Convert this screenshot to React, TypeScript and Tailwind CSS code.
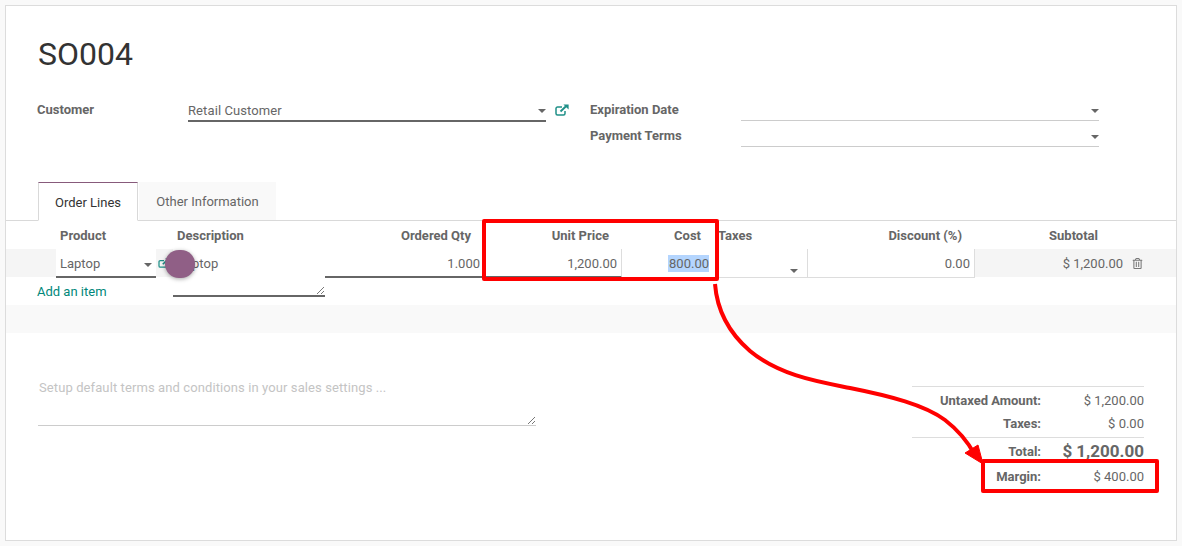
import React from "react";
import { FaRegTrashAlt } from "react-icons/fa";

function Caret({ className = "" }: { className?: string }) {
  return <span className={`w-0 h-0 border-x-[4px] border-x-transparent border-t-[4px] border-t-[#666] ${className}`} />;
}

function Th({ w, right, children, className = "" }: { w: string; right?: boolean; children?: React.ReactNode; className?: string }) {
  return <div className={`${w} shrink-0 font-bold text-[#666] ${right ? "text-right" : ""} ${className}`}>{children}</div>;
}

function Ext({ className = "" }: { className?: string }) {
  return (
    <svg className={`shrink-0 text-[#1f9088] ${className}`} viewBox="0 0 14 12" fill="none">
      <path d="M10 7v2.5A1.5 1.5 0 0 1 8.5 11h-6A1.5 1.5 0 0 1 1 9.5v-5A1.5 1.5 0 0 1 2.5 3H7" stroke="currentColor" strokeWidth="1.5" />
      <path d="M5.5 7.5 L11 2.2" stroke="currentColor" strokeWidth="1.9" />
      <path d="M8.4 0.4h5.2v5.2z" fill="currentColor" />
    </svg>
  );
}

export default function App() {
  return (
    <div className="relative w-[1182px] h-[546px] overflow-hidden bg-[#f9f9f9] text-[13px] text-[#4c4c4c]" style={{ fontFamily: "Roboto, sans-serif" }}>
      <div className="absolute left-[5px] top-[5px] w-[1172px] h-[536px] bg-white border border-[#dcdcdc] flex flex-col">
        {/* Title */}
        <h1 className="ml-[32px] mt-[26px] h-[44px] text-[32px] leading-[44px] text-[#333]">SO004</h1>

        {/* Header form */}
        <div className="mt-[18px] h-[88px] flex">
          <div className="ml-[31px] w-[151px] leading-[20px] font-bold text-[#666] pt-[6px]">Customer</div>
          <div className="w-[358px] h-[28px] border-b-2 border-[#666] flex items-center justify-between pt-[8px] text-[#666] tracking-[0.1px]">
            <span>Retail Customer</span>
            <Caret />
          </div>
          <Ext className="ml-[9px] mt-[10px] w-[14px] h-[12px]" />
          <div className="ml-[21px] w-[151px] font-bold text-[#666] pt-[6px] leading-[20px]">
            <div>Expiration Date</div>
            <div className="mt-[6px]">Payment Terms</div>
          </div>
          <div className="w-[358px]">
            <div className="h-[27px] border-b border-[#ccc] flex items-center justify-end"><Caret className="mt-[7px]" /></div>
            <div className="h-[26px] border-b border-[#ccc] flex items-center justify-end"><Caret className="mt-[6px]" /></div>
          </div>
        </div>

        {/* Tabs */}
        <div className="h-[39px] flex border-b border-[#d9d9d9] pl-[32px]">
          <div className="w-[100px] h-[39px] bg-white border border-[#d9d9d9] border-b-white border-t-[#875a7b] flex items-center justify-center text-[#333] pt-[2px]">Order Lines</div>
          <div className="ml-[1px] w-[137px] h-[38px] bg-[#f9f9f9] flex items-center justify-center text-[#666] pt-[2px]">Other Information</div>
        </div>

        {/* List header */}
        <div className="h-[28px] flex items-center pt-[2px]">
          <Th w="w-[150px]" className="pl-[54px]">Product</Th>
          <Th w="w-[170px]" className="pl-[21px]">Description</Th>
          <Th w="w-[145px]" right>Ordered Qty</Th>
          <Th w="w-[138px]" right>Unit Price</Th>
          <Th w="w-[92px]" right>Cost</Th>
          <Th w="w-[120px]" className="pl-[17px]">Taxes</Th>
          <Th w="w-[141px]" right>Discount (%)</Th>
          <Th w="w-[136px]" right>Subtotal</Th>
        </div>

        {/* Edited row */}
        <div className="h-[28px] flex bg-[#f5f5f5] text-[#666] shrink-0">
          <div className="ml-[50px] w-[100px] h-[29px] bg-white border-b-2 border-[#666] flex items-center justify-between pl-[4px] pr-[4px] pt-[2px]">
            <span>Laptop</span>
            <Caret className="mt-[2px]" />
          </div>
          <div className="w-[17px] flex pt-[9px] pl-[2px]">
            <Ext className="w-[12px] h-[10px]" />
          </div>
          <div className="relative w-[152px] h-[48px] bg-white border-b-2 border-[#666] pl-[5px] pt-[5px] z-10">
            <span>Laptop</span>
            <svg className="absolute right-0 bottom-0" width="9" height="9" viewBox="0 0 9 9" stroke="#555" strokeWidth="0.8">
              <path d="M1 8 L8 1 M5 8 L8 5" />
            </svg>
          </div>
          <div className="w-[157px] h-[29px] bg-white border-b-2 border-[#666] flex items-center justify-end pr-[2px] pt-[2px]">1.000</div>
          <div className="w-[140px] h-[29px] bg-white border-r border-b-2 border-[#666] border-r-[#ddd] flex items-center justify-end pr-[4px] pt-[2px]">1,200.00</div>
          <div className="w-[96px] h-[29px] bg-white border-r border-b border-[#ddd] flex items-center justify-end pr-[8px] pb-[1px] pt-[1px]">
            <span className="bg-[#b4d5fe] leading-[17px] pl-[1px]">800.00</span>
          </div>
          <div className="w-[90px] h-[29px] bg-white border-r border-b border-[#ddd] flex items-end justify-end pr-[9px] pb-[4px]"><Caret /></div>
          <div className="w-[167px] h-[29px] bg-white border-r border-b border-[#ddd] flex items-center justify-end pr-[4px] pt-[2px]">0.00</div>
          <div className="w-[148px] flex items-center justify-end pt-[1px]">$ 1,200.00</div>
          <div className="flex items-center pl-[9px]"><FaRegTrashAlt className="text-[#777]" size={11} /></div>
        </div>

        {/* Add an item */}
        <div className="h-[28px] ml-[31px] flex items-center text-[#00877a] shrink-0 pt-[2px]">Add an item</div>
        <div className="h-[28px] bg-[#f9f9f9] shrink-0" />

        {/* Footer */}
        <div className="flex-1 flex">
          <div className="relative ml-[32px] mt-[45px] w-[498px] h-[48px] border-b border-[#ccc] pl-[1px] text-[#c4c4c4] leading-[20px] tracking-[0.1px]">
            Setup default terms and conditions in your sales settings ...
            <svg className="absolute right-0 bottom-0" width="9" height="9" viewBox="0 0 9 9" stroke="#555" strokeWidth="0.8">
              <path d="M1 8 L8 1 M5 8 L8 5" />
            </svg>
          </div>
          <div className="ml-[376px] mt-[53px] w-[232px] text-[#666]">
            <div className="border-t border-[#ddd] h-[51px] pt-[2px]">
              <div className="flex h-[23px] items-center"><span className="w-[129px] text-right font-bold">Untaxed Amount:</span><span className="flex-1 text-right">$ 1,200.00</span></div>
              <div className="flex h-[23px] items-center"><span className="w-[129px] text-right font-bold">Taxes:</span><span className="flex-1 text-right">$ 0.00</span></div>
            </div>
            <div className="border-t border-[#ddd] flex h-[25px] items-end"><span className="w-[129px] text-right font-bold pb-[1px]">Total:</span><span className="flex-1 text-right font-bold text-[17px] leading-[22px]">$ 1,200.00</span></div>
            <div className="flex h-[24px] mt-[3px] items-center"><span className="w-[129px] text-right font-bold">Margin:</span><span className="flex-1 text-right">$ 400.00</span></div>
          </div>
        </div>
      </div>

      {/* Ripple */}
      <div className="absolute left-[165px] top-[250px] w-[30px] h-[28px] rounded-full bg-[#905f86] shadow-[0_1px_4px_rgba(0,0,0,0.35)] z-20" />

      {/* Annotations */}
      <div className="absolute left-[482px] top-[219px] w-[237px] h-[62px] border-[4px] border-[#f00] rounded-[2px] z-30" />
      <div className="absolute left-[981px] top-[459px] w-[178px] h-[34px] border-[4px] border-[#f00] rounded-[2px] z-30" />
      <svg className="absolute left-0 top-0 z-30" width="1182" height="546" viewBox="0 0 1182 546" fill="none">
        <path d="M715 284 C717 310 728 332 750 351 C780 376 820 382 850 388 C890 396 925 405 945 420 C958 430 968 442 975 455" stroke="#f00" strokeWidth="4" />
        <path d="M965 453 L978 445 L983 464 Z" fill="#f00" stroke="#f00" strokeWidth="1" />
      </svg>
    </div>
  );
}
